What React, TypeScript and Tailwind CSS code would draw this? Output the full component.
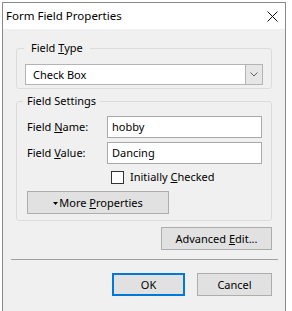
import React from "react";

function Btn({ children, className }: { children: React.ReactNode; className: string }) {
  return (
    <div
      className={`flex items-center justify-center bg-[#e1e1e1] text-black ${className}`}
    >
      {children}
    </div>
  );
}

export default function App() {
  return (
    <div
      className="w-[292px] h-[311px] bg-white overflow-hidden text-[11px] text-black"
      style={{ fontFamily: '"Noto Sans", "Open Sans", sans-serif' }}
    >
      <div className="ml-[2px] mt-[2px] w-[284px] h-[330px] border border-[#8a8a8a] bg-[#f0f0f0] flex flex-col">
        {/* title bar */}
        <div className="h-[26px] bg-white flex items-center justify-between pl-[3px] pr-[7px]">
          <span className="leading-[16px] text-[11.5px]">Form Field Properties</span>
          <svg width="11" height="11" viewBox="0 0 11 11">
            <path d="M0.5 0.5 L10.5 10.5 M10.5 0.5 L0.5 10.5" stroke="#111" strokeWidth="1" />
          </svg>
        </div>

        {/* body */}
        <div className="px-[13px] pt-[11px] flex flex-col">
          <fieldset className="border border-[#dcdcdc] rounded-[3px] px-[8px] pt-[8px] pb-[3px]">
            <legend className="ml-[-1px] px-[7px] leading-[16px]">
              Field <span className="underline">T</span>ype
            </legend>
            <div className="h-[21px] flex bg-white border border-[#b4b4b4]">
              <div className="flex-1 flex items-center pl-[7px] leading-[16px]">Check Box</div>
              <div className="w-[18px] bg-[#e6e6e6] border border-[#b4b4b4] -mt-px -mr-px h-[21px] flex items-center justify-center">
                <svg width="8" height="5" viewBox="0 0 8 5">
                  <path d="M0.5 0.5 L4 4 L7.5 0.5" stroke="#606060" strokeWidth="1" fill="none" />
                </svg>
              </div>
            </div>
          </fieldset>

          <fieldset className="mt-[4px] border border-[#dcdcdc] rounded-[3px] pl-[10px] pr-[9px] pt-[7px] pb-[6px]">
            <legend className="ml-[-4px] px-[4px] leading-[16px]">Field Settings</legend>
            <div className="flex items-center">
              <span className="w-[80px] leading-[16px]">
                Field <span className="underline">N</span>ame:
              </span>
              <div className="flex-1 h-[22px] bg-white border border-[#a9a9a9] flex items-center pl-[4px] leading-[16px]">
                hobby
              </div>
            </div>
            <div className="flex items-center mt-[4px]">
              <span className="w-[80px] leading-[16px]">
                Field <span className="underline">V</span>alue:
              </span>
              <div className="flex-1 h-[22px] bg-white border border-[#a9a9a9] flex items-center pl-[4px] leading-[16px]">
                Dancing
              </div>
            </div>
            <div className="flex items-center mt-[5px] pl-[84px] h-[16px]">
              <div className="w-[13px] h-[13px] bg-white border border-[#333]" />
              <span className="ml-[6px] leading-[16px]">
                Initially <span className="underline">C</span>hecked
              </span>
            </div>
            <Btn className="mt-[6px] w-[142px] h-[23px] border border-[#adadad]">
              <svg width="5" height="3" viewBox="0 0 5 3" className="mr-[1px] mt-[1px]">
                <path d="M0 0 L5 0 L2.5 3 Z" fill="#000" />
              </svg>
              <span className="leading-[16px]">
                More <span className="underline">P</span>roperties
              </span>
            </Btn>
          </fieldset>

          <div className="flex justify-end mt-[6px]">
            <Btn className="w-[111px] h-[23px] border border-[#adadad]">
              <span className="leading-[16px]">
                Advanced <span className="underline">E</span>dit...
              </span>
            </Btn>
          </div>
        </div>

        <div className="ml-[8px] mr-[7px] mt-[9px] h-px bg-[#a0a0a0]" />

        <div className="flex justify-end gap-[12px] pr-[13px] mt-[13px]">
          <Btn className="w-[73px] h-[23px] border-2 border-[#0078d7]">
            <span className="leading-[16px]">OK</span>
          </Btn>
          <Btn className="w-[75px] h-[23px] border border-[#adadad]">
            <span className="leading-[16px]">Cancel</span>
          </Btn>
        </div>
      </div>
    </div>
  );
}
